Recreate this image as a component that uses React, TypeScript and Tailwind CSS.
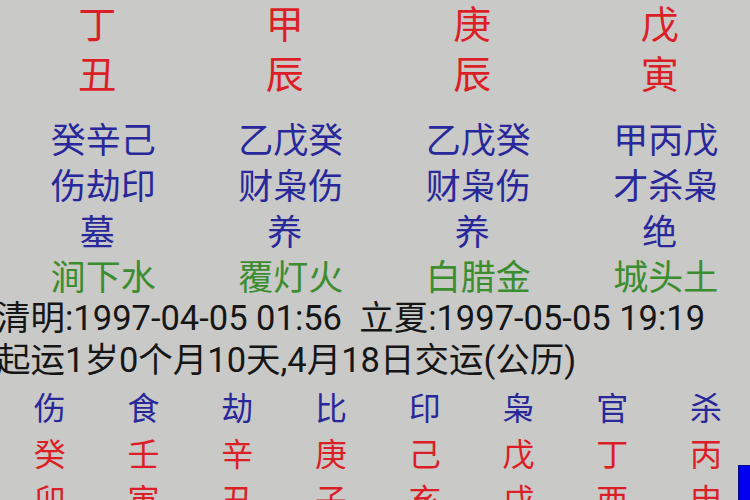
const cjk = "font-['Noto_Sans_CJK_SC','Noto_Sans',sans-serif]";

const stems = ["丁", "甲", "庚", "戊"];
const branches = ["丑", "辰", "辰", "寅"];
const hidden = ["癸辛己", "乙戊癸", "乙戊癸", "甲丙戊"];
const gods = ["伤劫印", "财枭伤", "财枭伤", "才杀枭"];
const stages = ["墓", "养", "养", "绝"];
const nayin = ["涧下水", "覆灯火", "白腊金", "城头土"];

const luckGods = ["伤", "食", "劫", "比", "印", "枭", "官", "杀"];
const luckStems = ["癸", "壬", "辛", "庚", "己", "戊", "丁", "丙"];
const luckBranches = ["卯", "寅", "丑", "子", "亥", "戌", "酉", "申"];

function Row4({ items, className, pad }: { items: string[]; className: string; pad: string }) {
  return (
    <div className="grid grid-cols-4">
      {items.map((t, i) => (
        <div key={i} className={`${pad} text-center ${className}`}>
          {t}
        </div>
      ))}
    </div>
  );
}

function Row8({ items, className }: { items: string[]; className: string }) {
  return (
    <div className="grid grid-cols-8">
      {items.map((t, i) => (
        <div key={i} className={`pl-[6px] text-center ${className}`}>
          {t}
        </div>
      ))}
    </div>
  );
}

export default function App() {
  return (
    <div className={`relative w-[750px] h-[500px] overflow-hidden bg-[#c9c9c7] ${cjk}`}>
      {/* 四柱 */}
      <div className="flex flex-col gap-[6px]">
        <Row4 items={stems} pad="pl-[7px]" className="text-[38px] leading-[44px] text-[#dc1e26]" />
        <Row4 items={branches} pad="pl-[7px]" className="text-[38px] leading-[44px] text-[#dc1e26]" />
      </div>

      <div className="mt-[21px]">
        <Row4 items={hidden} pad="pl-[19px]" className="text-[35px] leading-[46px] text-[#28289a]" />
        <Row4 items={gods} pad="pl-[19px]" className="text-[35px] leading-[46px] text-[#28289a]" />
        <Row4 items={stages} pad="pl-[7px]" className="text-[35px] leading-[45px] text-[#28289a]" />
        <Row4 items={nayin} pad="pl-[19px]" className="text-[35px] leading-[46px] text-[#3b8d30]" />
      </div>

      {/* 节气 / 起运 */}
      <div className="mt-[-1px] ml-[-4px] text-[#161616] font-['Roboto','Noto_Sans_CJK_SC',sans-serif] text-[34.5px] leading-[42px] whitespace-pre">
        <div>清明:1997-04-05 01:56  立夏:1997-05-05 19:19</div>
        <div>起运1岁0个月10天,4月18日交运(公历)</div>
      </div>

      {/* 大运 */}
      <div className="mt-[2px]">
        <Row8 items={luckGods} className="text-[32px] leading-[46px] text-[#28289a]" />
        <Row8 items={luckStems} className="text-[32px] leading-[46px] text-[#dc1e26]" />
        <Row8 items={luckBranches} className="text-[32px] leading-[46px] text-[#dc1e26]" />
      </div>

      <div className="absolute right-0 bottom-0 w-[12px] h-[35px] bg-[#0000ee] border-l border-t border-[#0a0a8a]" />
    </div>
  );
}
